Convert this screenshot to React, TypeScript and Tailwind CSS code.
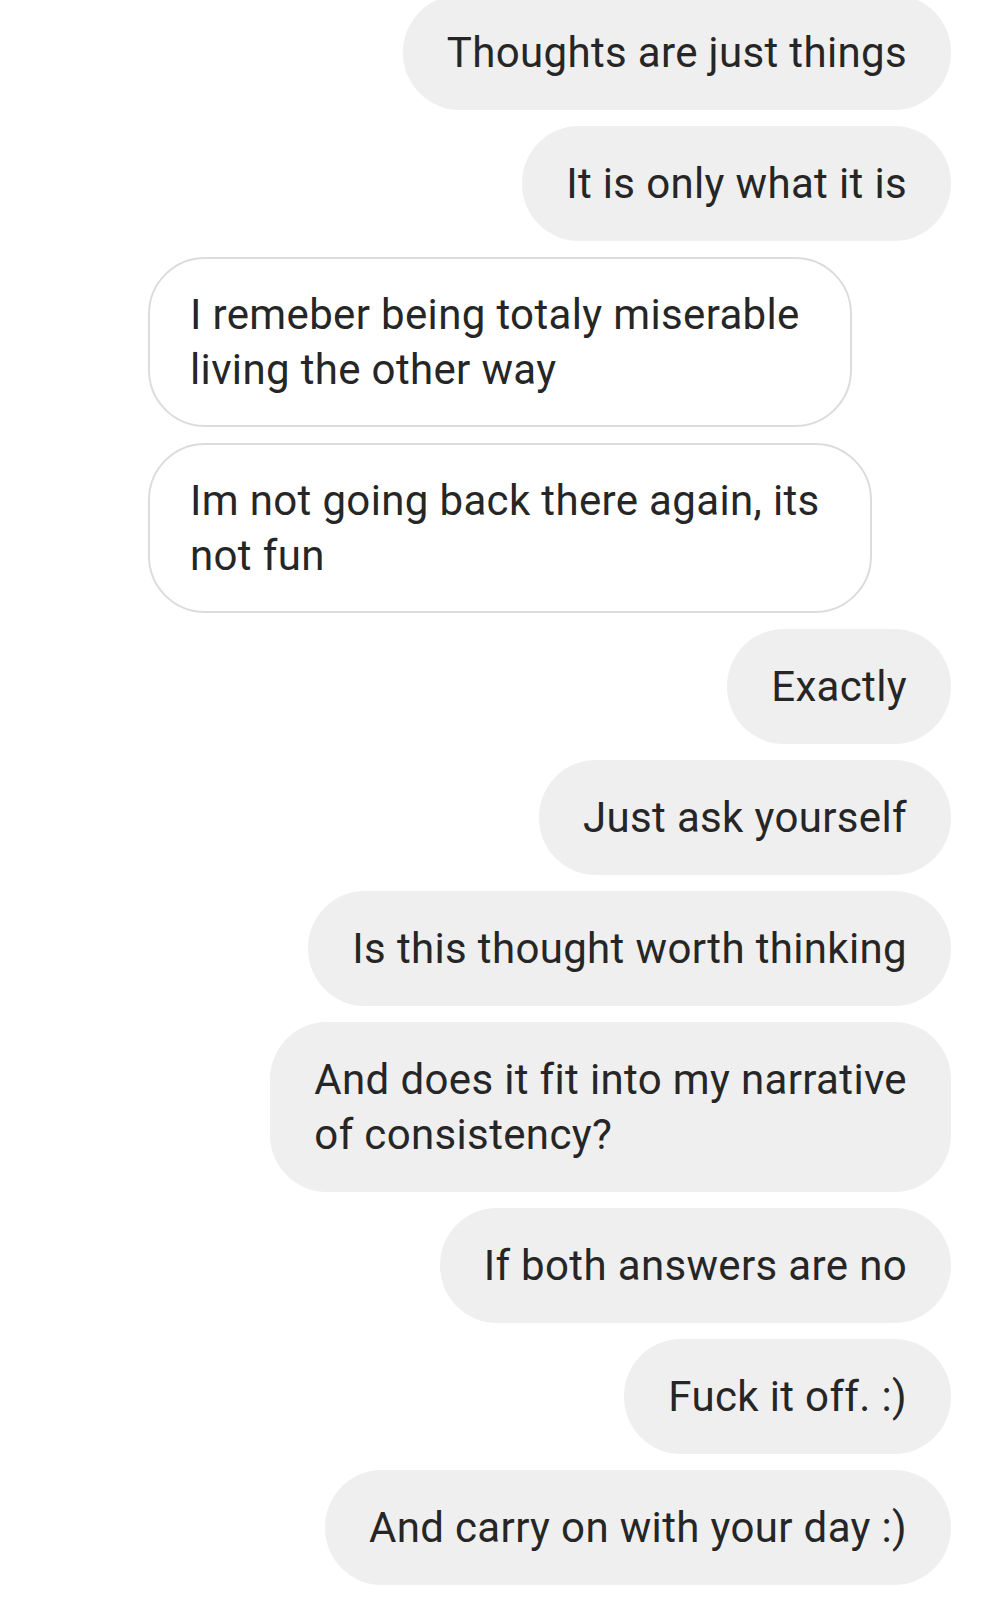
const messages: { text: string[]; mine: boolean }[] = [
  { text: ["Thoughts are just things"], mine: true },
  { text: ["It is only what it is"], mine: true },
  { text: ["I remeber being totaly miserable", "living the other way"], mine: false },
  { text: ["Im not going back there again, its", "not fun"], mine: false },
  { text: ["Exactly"], mine: true },
  { text: ["Just ask yourself"], mine: true },
  { text: ["Is this thought worth thinking"], mine: true },
  { text: ["And does it fit into my narrative", "of consistency?"], mine: true },
  { text: ["If both answers are no"], mine: true },
  { text: ["Fuck it off. :)"], mine: true },
  { text: ["And carry on with your day :)"], mine: true },
];

const App = () => {
  return (
    <div className="min-h-[1600px] overflow-hidden bg-white font-['Roboto',sans-serif] text-[#262626]">
      <div className="-mt-[5px] flex flex-col gap-[16px] pl-[148px] pr-[31px]">
        {messages.map((m, i) => (
          <div
            key={i}
            className={m.mine ? "flex justify-end" : "flex justify-start"}
          >
            <div
              className={
                m.mine
                  ? "rounded-[57px] bg-[#efefef] px-[44px] py-[30px] text-[42px] leading-[55px] tracking-[0.35px] whitespace-nowrap"
                  : "rounded-[57px] border-2 border-[#dcdcdc] bg-white pl-[40px] pr-[50px] py-[28px] text-[42px] leading-[55px] tracking-[0.35px] whitespace-nowrap"
              }
            >
              {m.text.map((line, j) => (
                <div key={j}>{line}</div>
              ))}
            </div>
          </div>
        ))}
      </div>
    </div>
  );
};

export default App;
